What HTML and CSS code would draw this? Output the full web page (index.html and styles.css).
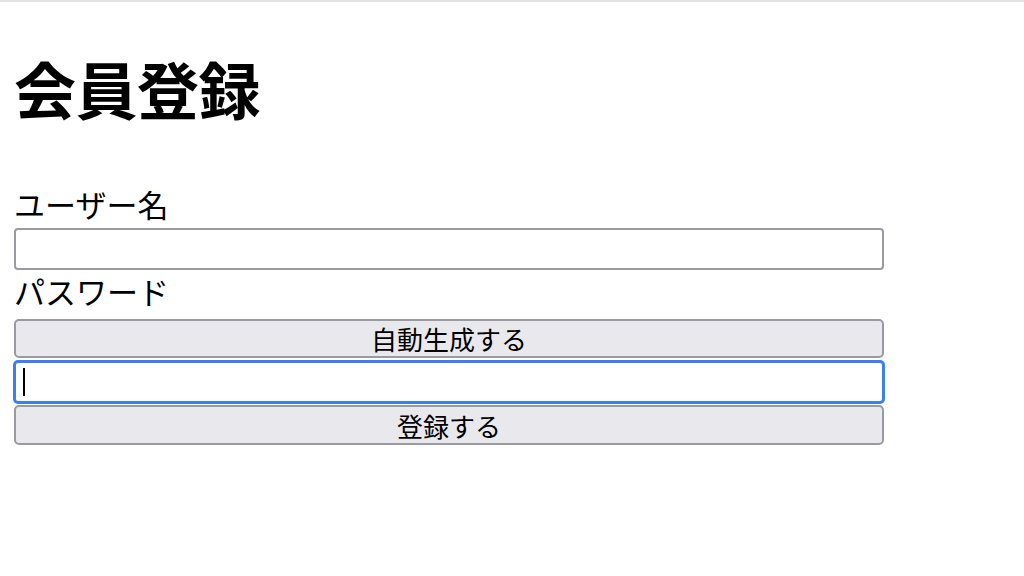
FILE: index.html
```html
<!DOCTYPE html>
<html lang="ja">
<head>
<meta charset="utf-8">
<title>会員登録</title>
<link rel="stylesheet" href="styles.css">
</head>
<body>
<main class="page">
  <h1 class="title">会員登録</h1>
  <form class="form">
    <label class="label label-user" for="username">ユーザー名</label>
    <input class="field" id="username" type="text">
    <label class="label label-pw" for="password">パスワード</label>
    <button class="btn btn-gen" type="button">自動生成する</button>
    <div class="field field-focus"><span class="caret"></span></div>
    <button class="btn btn-submit" type="submit">登録する</button>
  </form>
</main>
</body>
</html>
```

FILE: styles.css
```css
html, body {
  margin: 0;
  padding: 0;
  background: #ffffff;
}
body {
  border-top: 2px solid #e2e2e4;
  font-family: "Noto Sans CJK JP", "Noto Sans", sans-serif;
  color: #000;
}
.page {
  padding: 0 140px 0 14px;
}
.title {
  margin: 0;
  padding-top: 48px;
  font-size: 62px;
  line-height: 77px;
  font-weight: 700;
  letter-spacing: -0.5px;
}
.form {
  display: flex;
  flex-direction: column;
  width: 870px;
  margin-top: 57px;
}
.label {
  font-size: 31px;
  line-height: 40px;
  height: 40px;
}
.label-user {
  margin-bottom: 4px;
}
.label-pw {
  margin-top: 2px;
  margin-bottom: 9px;
  line-height: 38px;
  height: 38px;
}
.field {
  box-sizing: border-box;
  width: 870px;
  height: 42px;
  margin: 0;
  border: 2px solid #9a9aa2;
  border-radius: 4px;
  background: #fff;
  padding: 0 8px;
  font: inherit;
  outline: none;
}
.field-focus {
  margin-top: 3px;
  margin-bottom: 2px;
  border: 2px solid #3d7ef5;
  box-shadow: 0 0 0 1px #3d7ef5;
  display: flex;
  align-items: center;
  padding-left: 7px;
}
.caret {
  display: block;
  width: 2px;
  height: 28px;
  background: #000;
}
.btn {
  box-sizing: border-box;
  width: 870px;
  height: 39px;
  margin: 0;
  padding: 0;
  border: 2px solid #9a9aa2;
  border-radius: 5px;
  background: #e9e9ed;
  color: #000;
  font-family: "Noto Sans CJK JP", "Noto Sans", sans-serif;
  font-size: 26px;
  line-height: 35px;
}
.btn-submit {
  height: 40px;
}
```
